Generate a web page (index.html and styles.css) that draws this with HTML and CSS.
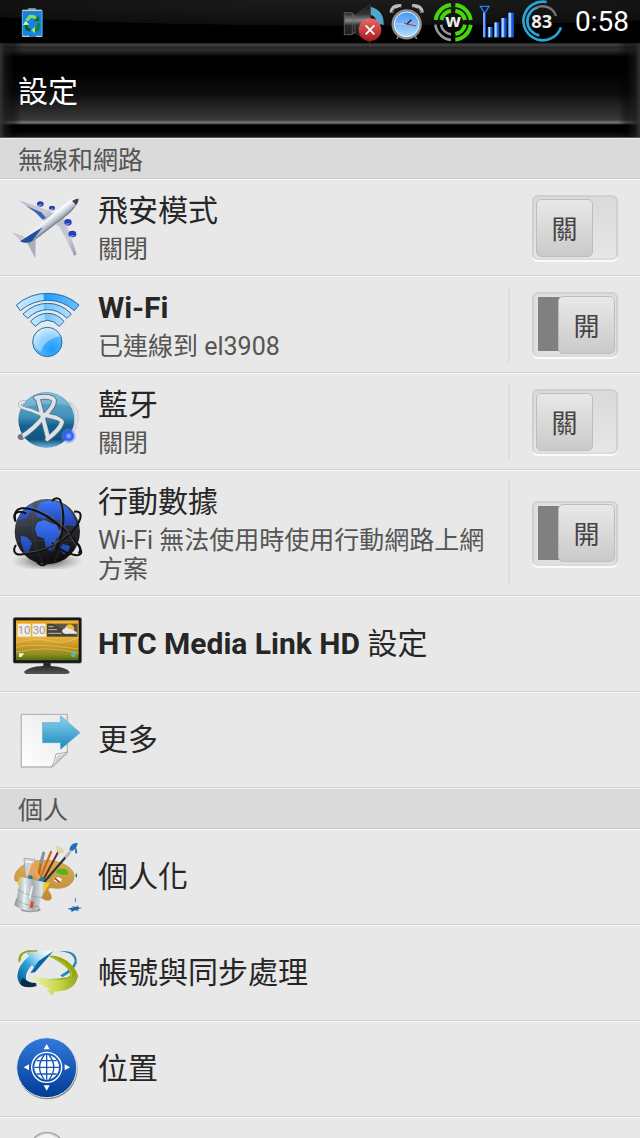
FILE: index.html
```html
<!DOCTYPE html>
<html lang="zh-Hant">
<head>
  <meta charset="UTF-8">
  <meta name="viewport" content="width=device-width, initial-scale=1.0">
  <title>設定</title>
  <link rel="stylesheet" href="styles.css">
</head>
<body>
<div class="screen">

  <!-- Status bar -->
  <div class="status-bar">
    <svg class="status-battery" width="24" height="32" viewBox="60 16 72 96">
      <rect x="84" y="22" width="24" height="8" rx="2" fill="#888"/>
      <rect x="66" y="27" width="61" height="82" rx="4" fill="#1784dc"/>
      <path d="M67 29h59M67 107h20M108 107h18" stroke="#ccc" stroke-width="4"/>
      <path d="M67 30v76M126 30v76" stroke="#5cb0ee" stroke-width="3"/>
      <path d="M80 60l10-13 12 1 8 10" fill="none" stroke="#8bdc5c" stroke-width="9"/>
      <path d="M100 60l18 2-2-16z" fill="#176b1a"/>
      <path d="M117 68l-4 18-10 3" fill="none" stroke="#1e7f1c" stroke-width="9"/>
      <path d="M105 78l-11 11 11 9z" fill="#a9e57a"/>
      <path d="M91 88l-10-3-3-13" fill="none" stroke="#0f5e1d" stroke-width="9"/>
      <path d="M69 73l8-13 10 12z" fill="#d7f4c1"/>
    </svg>
    <div class="status-icons">
      <svg width="42" height="43" viewBox="37 0 126 129">
        <defs>
          <linearGradient id="horn" x1="0" y1="0" x2="0" y2="1">
            <stop offset="0" stop-color="#1a1a1a"/><stop offset=".25" stop-color="#333"/><stop offset=".42" stop-color="#888"/><stop offset=".55" stop-color="#2a2a2a"/><stop offset="1" stop-color="#111"/>
          </linearGradient>
          <linearGradient id="mute" x1="0" y1="0" x2="0" y2="1">
            <stop offset="0" stop-color="#e86a64"/><stop offset="1" stop-color="#a81b1f"/>
          </linearGradient>
        </defs>
        <path d="M122 20q42 10 40 55l-22-5q0-22-18-26z" fill="#4fa6cb"/>
        <path d="M44 38h24v6h10l44-30v114L78 100H68v4H44z" fill="url(#horn)" stroke="#444" stroke-width="2"/>
        <path d="M44 38h24v66H44zM68 44h8v55h-8" fill="none" stroke="#666" stroke-width="2"/>
        <circle cx="121" cy="89" r="34" fill="url(#mute)"/>
        <path d="M108 76l26 27M134 76l-26 27" stroke="#fff" stroke-width="5"/>
      </svg>
      <svg width="38" height="43" viewBox="175 0 114 129">
        <defs>
          <linearGradient id="dial" x1="0" y1="0" x2="0" y2="1">
            <stop offset="0" stop-color="#3f8ff0"/><stop offset="1" stop-color="#b9e3ff"/>
          </linearGradient>
        </defs>
        <path d="M205 105l-6 12M252 105l6 12" stroke="#888" stroke-width="5"/>
        <path d="M182 38q2-22 30-20M274 38q-2-22-30-20" fill="none" stroke="#bbb" stroke-width="11"/>
        <path d="M184 36l10-12M202 24l12-4M272 36l-10-12M254 24l-12-4" stroke="#333" stroke-width="3"/>
        <circle cx="228" cy="73" r="42" fill="url(#dial)" stroke="#8e8e8e" stroke-width="7"/>
        <circle cx="228" cy="73" r="37" fill="none" stroke="#e4f1fb" stroke-width="3"/>
        <path d="M228 73l14-14" stroke="#223" stroke-width="4"/>
        <path d="M196 72h32" stroke="#dbeaff" stroke-width="2"/>
        <path d="M220 70l36 8" stroke="#c03030" stroke-width="3"/>
      </svg>
      <svg width="42" height="43" viewBox="304 0 126 129">
        <g fill="none" stroke="#42d80a" stroke-width="12">
          <path d="M315 60a52 52 0 0 1 46-45M374 15a52 52 0 0 1 46 45M420 74a52 52 0 0 1-46 45"/>
          <path d="M332 60a35 35 0 0 1 29-28M374 32a35 35 0 0 1 29 28M403 74a35 35 0 0 1-29 28"/>
        </g>
        <path d="M314 74a53 53 0 0 0 47 46M331 74a36 36 0 0 0 30 29" fill="none" stroke="#999" stroke-width="8"/>
        <text class="badge-text" x="367" y="81">w</text>
      </svg>
      <svg width="36" height="43" viewBox="445 0 108 129">
        <defs>
          <linearGradient id="bars" x1="0" y1="0" x2="1" y2="0">
            <stop offset="0" stop-color="#1d6be6"/><stop offset=".35" stop-color="#d8edff"/><stop offset=".6" stop-color="#1e6cec"/><stop offset="1" stop-color="#0740b0"/>
          </linearGradient>
        </defs>
        <path d="M449 19h26l-13 21z" fill="none" stroke="#2b7ce8" stroke-width="4"/>
        <path d="M457 38h9v74h-9z" fill="url(#bars)"/>
        <path d="M471 81h15v31h-15z" fill="url(#bars)"/>
        <path d="M490 67h16v45h-16z" fill="url(#bars)"/>
        <path d="M511 54h17v58h-17z" fill="url(#bars)"/>
        <path d="M532 38h18v74h-18z" fill="url(#bars)"/>
      </svg>
      <svg width="43" height="43" viewBox="568 0 129 129">
        <path d="M648 6a58 58 0 1 0 43 76" fill="none" stroke="#2ba5d8" stroke-width="8"/>
        <path d="M622 22a43 43 0 0 0 4 84" fill="none" stroke="#2ba5d8" stroke-width="8"/>
        <path d="M617 23a43 43 0 0 1 59 25" fill="none" stroke="#777" stroke-width="7"/>
        <text class="badge-text" x="633" y="83">83</text>
      </svg>
    </div>
    <time class="clock">0:58</time>
  </div>

  <header class="title-bar">
    <h1>設定</h1>
  </header>

  <main class="settings">
    <h2>無線和網路</h2>
    <ul>
      <li class="row">
        <svg class="icon" viewBox="33 33 216 216">
          <defs>
            <linearGradient id="body" gradientUnits="userSpaceOnUse" x1="135" y1="98" x2="163" y2="134">
              <stop offset="0" stop-color="#8e97ab"/><stop offset=".35" stop-color="#fff"/><stop offset=".6" stop-color="#d8dbe3"/><stop offset="1" stop-color="#7f879a"/>
            </linearGradient>
            <linearGradient id="wing" x1="0" y1="0" x2="1" y2="1">
              <stop offset="0" stop-color="#b9bdc6"/><stop offset=".6" stop-color="#c9ccd6"/><stop offset="1" stop-color="#9196a6"/>
            </linearGradient>
          </defs>
          <path d="M56 58l88 30 24 14-24 28-24-24z" fill="url(#wing)"/>
          <path d="M78 74l28 20 22 22 10-6-14-16z" fill="#3766b6"/>
          <path d="M170 122l20-16 18 48 22 66-8 4-52-80z" fill="url(#wing)"/>
          <path d="M166 132l12 4 42 82-4 2-46-72z" fill="#e6e8ef"/>
          <g fill="#2440b8">
            <ellipse cx="121" cy="69" rx="10" ry="8"/><ellipse cx="156" cy="81" rx="9" ry="7"/>
            <ellipse cx="204" cy="124" rx="11" ry="10"/><ellipse cx="217" cy="159" rx="12" ry="10"/>
          </g>
          <path d="M113 75l12-4M148 87l12-4M196 130l12-2M209 166l12-2" stroke="#a9b4dd" stroke-width="3"/>
          <path d="M78 168l-42-14 26 26z" fill="#c3c7cf"/>
          <path d="M80 182l26 50 1-62z" fill="#a9aeb9"/>
          <path d="M236 53q-14-5-39 14L98 149 62 180q20 12 44-4l103-79q28-29 27-44z" fill="url(#body)"/>
          <path d="M60 181l34-22 34-20-22 28-10 14q-18 9-36 0z" fill="#20509c"/>
          <path d="M216 60q12-8 20-7 0 9-8 20l-6-8z" fill="#39404f"/>
          <path d="M108 172l96-74 20-22" fill="none" stroke="#717a92" stroke-width="3"/>
        </svg>
        <a class="text" href="#airplane">
          <span class="name">飛安模式</span>
          <span class="summary">關閉</span>
        </a>
        <label class="switch">
          <input type="checkbox" aria-label="飛安模式">
          <span class="thumb">關</span>
        </label>
      </li>

      <li class="row">
        <svg class="icon" viewBox="33 324 216 216">
          <defs>
            <linearGradient id="wave" x1="0" y1="0" x2="1" y2="0">
              <stop offset="0" stop-color="#c4e7ff"/><stop offset=".43" stop-color="#a6dbff"/><stop offset=".44" stop-color="#1c9cf8"/><stop offset="1" stop-color="#6cc0fb"/>
            </linearGradient>
            <linearGradient id="wave-soft" x1="0" y1="0" x2="1" y2="0">
              <stop offset="0" stop-color="#c4e7ff"/><stop offset=".43" stop-color="#a6dbff"/><stop offset=".44" stop-color="#6fc1fb"/><stop offset="1" stop-color="#b4dffd"/>
            </linearGradient>
            <radialGradient id="ball" cx=".65" cy=".75" r=".75">
              <stop offset="0" stop-color="#1f9bf9"/><stop offset=".6" stop-color="#55b5fb"/><stop offset="1" stop-color="#c2e6ff"/>
            </radialGradient>
          </defs>
          <g transform="translate(0 180)" fill="url(#wave-soft)" stroke="#246da8" stroke-width="3" stroke-linejoin="round">
            <path d="M49 192Q89 157 143 157T237 192L223 209Q188 178 143 178T61 209z" fill="url(#wave)"/>
            <path d="M69 219Q102 187 143 187T214 219L201 232Q175 206 143 206T83 232z"/>
            <path d="M91 241Q115 217 143 217T192 241L178 256Q162 238 142 238T106 256z"/>
            <circle cx="142" cy="303" r="44" fill="url(#ball)"/>
          </g>
          <path d="M101 483q4-38 41-42 27 0 39 25-48 8-58 46-17-8-22-29z" fill="#d9f0ff" opacity=".5"/>
        </svg>
        <a class="text" href="#wifi">
          <span class="name"><b>Wi-Fi</b></span>
          <span class="summary">已連線到 el3908</span>
        </a>
        <label class="switch split">
          <input type="checkbox" aria-label="Wi-Fi" checked>
          <span class="thumb">開</span>
        </label>
      </li>

      <li class="row">
        <svg class="icon" viewBox="33 45 216 216">
          <defs>
            <linearGradient id="bt" x1="0" y1="0" x2="0" y2="1">
              <stop offset="0" stop-color="#69afd0"/><stop offset=".45" stop-color="#3f90b9"/><stop offset=".6" stop-color="#146190"/><stop offset=".85" stop-color="#0f5482"/><stop offset="1" stop-color="#79b9da"/>
            </linearGradient>
            <radialGradient id="glow">
              <stop offset="0" stop-color="#9cf"/><stop offset=".5" stop-color="#2354ff"/><stop offset="1" stop-color="#a0a0ff" stop-opacity="0"/>
            </radialGradient>
          </defs>
          <circle cx="139" cy="147" r="84" fill="url(#bt)"/>
          <path d="M68 110q20-43 71-45 49 2 68 40-66-15-139 5z" fill="#fff" opacity=".2"/>
          <path d="M205 92q32 12 30 50-3 34-24 50 16-29 14-57-3-25-20-43z" fill="#e1e4e8" stroke="#b4bac4" stroke-width="2"/>
          <g fill="none" stroke-linecap="round" stroke-linejoin="round">
            <path d="M114 84l30 116M108 80q46-8 54 8 2 18-32 50-26 34-66 60" stroke="#4a6f88" stroke-width="17"/>
            <path d="M130 132q54 8 56 22-6 22-44 50" stroke="#4a6f88" stroke-width="17"/>
            <path d="M72 93q-16 2-13 10 6 8 32 14l40 16" stroke="#8d9ba8" stroke-width="10"/>
            <path d="M72 93q-16 2-13 10 6 8 32 14l40 16" stroke="#e6e8eb" stroke-width="7"/>
            <path d="M114 84l30 116M108 80q46-8 54 8 2 18-32 50-26 34-66 60" stroke="#dee1e5" stroke-width="12"/>
            <path d="M130 132q54 8 56 22-6 22-44 50" stroke="#dee1e5" stroke-width="12"/>
          </g>
          <circle cx="61" cy="198" r="8" fill="#777"/>
          <circle cx="206" cy="195" r="24" fill="url(#glow)"/>
        </svg>
        <a class="text" href="#bluetooth">
          <span class="name">藍牙</span>
          <span class="summary">關閉</span>
        </a>
        <label class="switch split">
          <input type="checkbox" aria-label="藍牙">
          <span class="thumb">關</span>
        </label>
      </li>

      <li class="row">
        <svg class="icon" viewBox="33 379 216 216">
          <defs>
            <radialGradient id="shadow">
              <stop offset="0" stop-color="#444"/><stop offset="1" stop-color="#888" stop-opacity="0"/>
            </radialGradient>
            <linearGradient id="dark" x1=".3" y1="0" x2=".5" y2="1">
              <stop offset="0" stop-color="#5a5f6c"/><stop offset=".4" stop-color="#33363f"/><stop offset="1" stop-color="#0c0c0c"/>
            </linearGradient>
            <linearGradient id="land" x1="0" y1="0" x2="0" y2="1">
              <stop offset="0" stop-color="#3d78fb"/><stop offset="1" stop-color="#1c3fa8"/>
            </linearGradient>
          </defs>
          <ellipse cx="141" cy="572" rx="108" ry="30" fill="url(#shadow)"/>
          <circle cx="142" cy="483" r="98" fill="url(#dark)"/>
          <path d="M92 402q-28 16-38 48l26-8 10-17 16-10zM120 396l-14 24 4 20 24 4 14-10 10 12 20 4 12 20 14-8 28 8q-10-50-50-72-30-16-62-2z" fill="url(#land)"/>
          <path d="M112 455l22-7 20 10 16 4 6 16 14 2-22 26-4 18-14 18-14-16-3-22-22-8-6-22zM62 495l18 4 16 18-10 26-12 2q-12-24-12-50zM188 520l22 6-4 16-14 9-14-14z" fill="url(#land)"/>
          <path d="M50 462h184M50 510h184M112 392q-35 90 15 184M172 390q36 86-8 184" fill="none" stroke="#52688f" stroke-opacity=".4" stroke-width="2"/>
          <g fill="none" stroke="#111" stroke-width="6">
            <path d="M47 453c-14-50 31-51 91-18 58 41 102 81 106 110-4 22-60-2-88-28"/>
            <path d="M156 391q12-14 24-4c24 64 1 162-42 192-10 9-22 5-30-10"/>
            <path d="M222 423q24-4 19 20c-16 54-104 105-174 108-24 4-30-12-19-28"/>
            <path d="M46 450q-8-17 4-24 9-7 29 3M236 549q10-15-2-29"/>
          </g>
          <path d="M102 412q60 20 98 66l30 50M182 398q13 76-25 144M69 547q84-5 138-60" fill="none" stroke="#666" stroke-width="2"/>
        </svg>
        <a class="text" href="#mobile">
          <span class="name">行動數據</span>
          <span class="summary">Wi-Fi 無法使用時使用行動網路上網方案</span>
        </a>
        <label class="switch split">
          <input type="checkbox" aria-label="行動數據" checked>
          <span class="thumb">開</span>
        </label>
      </li>

      <li class="row single">
        <svg class="icon" viewBox="33 52 216 216">
          <defs>
            <linearGradient id="field" x1="0" y1="0" x2="0" y2="1">
              <stop offset="0" stop-color="#efa51a"/><stop offset=".4" stop-color="#e8b640"/><stop offset=".6" stop-color="#cf9a28"/><stop offset=".85" stop-color="#8f8f1e"/><stop offset="1" stop-color="#4c6a10"/>
            </linearGradient>
            <linearGradient id="stand" x1="0" y1="0" x2="0" y2="1">
              <stop offset="0" stop-color="#1b1b1b"/><stop offset="1" stop-color="#555"/>
            </linearGradient>
          </defs>
          <path d="M130 216h22v10q46 2 58 19-2 5-12 5H83q-10 0-11-7 14-15 58-17z" fill="url(#stand)"/>
          <rect x="40" y="81" width="204" height="136" rx="4" fill="#151515" stroke="#444" stroke-width="2"/>
          <rect x="48" y="89" width="188" height="120" fill="url(#field)"/>
          <path d="M49 156q60-16 102-5t84-11M49 170q50-14 186 5M49 184q90-20 186 3" fill="none" stroke="#f4d47b" stroke-width="3" opacity=".5"/>
          <rect x="53" y="99" width="39" height="39" fill="#f2efe8"/>
          <rect x="97" y="99" width="40" height="39" fill="#f2efe8"/>
          <rect x="141" y="99" width="92" height="39" fill="#4a4433"/>
          <text class="widget-time" x="72" y="131">10</text>
          <text class="widget-time" x="117" y="131">30</text>
          <path d="M145 108h16M145 117h26M145 128h40" stroke="#bbb" stroke-width="3"/>
          <circle cx="209" cy="115" r="14" fill="#ffae17"/>
          <path d="M187 124q-3-8 6-10 8-9 16 2 9-4 12 5 10 0 10 8h-24q-16 3-20-5z" fill="#dfe8ee"/>
          <path d="M57 188h16l-9 11h-7z" fill="#eaf2d8"/>
          <circle cx="220" cy="193" r="7" fill="#49b8c9"/>
          <path d="M140 90h95v48z" fill="#fff" opacity=".1"/>
        </svg>
        <a class="text" href="#media-link">
          <span class="name"><b>HTC Media Link HD</b> 設定</span>
        </a>
      </li>

      <li class="row single">
        <svg class="icon" viewBox="33 340 216 216">
          <defs>
            <linearGradient id="paper" x1="1" y1="0" x2="0" y2="1">
              <stop offset="0" stop-color="#e6e8e8"/><stop offset="1" stop-color="#fff"/>
            </linearGradient>
            <linearGradient id="arrow" x1="0" y1="0" x2="0" y2="1">
              <stop offset="0" stop-color="#8ad4ee"/><stop offset="1" stop-color="#1b85bd"/>
            </linearGradient>
          </defs>
          <path d="M64 371h138v115l-46 43H64z" fill="url(#paper)" stroke="#b5b8b8" stroke-width="4"/>
          <path d="M202 484q-14 4-34 6-4 26-13 39z" fill="#f6f6f6" stroke="#aaa" stroke-width="3"/>
          <path d="M198 488l-26 7-8 23z" fill="#d0d0d0"/>
          <path d="M128 396h54v-20l58 50-58 50v-20h-54z" fill="url(#arrow)" stroke="#4aa3c8" stroke-width="2"/>
        </svg>
        <a class="text" href="#more">
          <span class="name">更多</span>
        </a>
      </li>
    </ul>

    <h2>個人</h2>
    <ul>
      <li class="row single">
        <svg class="icon" viewBox="33 181 216 216">
          <defs>
            <linearGradient id="wood" x1="0" y1="0" x2="0" y2="1">
              <stop offset="0" stop-color="#e0ad50"/><stop offset="1" stop-color="#b98a35"/>
            </linearGradient>
            <linearGradient id="tin" x1="0" y1="0" x2="1" y2="0">
              <stop offset="0" stop-color="#8b9194"/><stop offset=".3" stop-color="#e4e9eb"/><stop offset=".55" stop-color="#a4adb1"/><stop offset=".8" stop-color="#dde3e6"/><stop offset="1" stop-color="#959b9e"/>
            </linearGradient>
          </defs>
          <ellipse cx="92" cy="387" rx="30" ry="8" fill="#666" opacity=".6"/>
          <path d="M45 300c-8-35 36-61 85-61 55 0 95 23 92 51-3 25-33 37-60 32-20-4-20 5-13 14 8 12 7 23-6 23-24 0-25-26-32-33z" fill="url(#wood)" stroke="#b98a3a" stroke-width="2"/>
          <path d="M167 274q13-17 35-6l4 13q-22 7-39-7z" fill="#52b51d"/>
          <path d="M162 300q2-10 14-10l9 5-5 13z" fill="#fff"/>
          <path d="M165 293l15 13" stroke="#9b3b25" stroke-width="5"/>
          <path d="M72 233l33 3-7 52H76z" fill="#ced1d2" stroke="#999" stroke-width="2"/>
          <path d="M76 242l22 3-13 36" stroke="#f8f8f8" stroke-width="5" fill="none"/>
          <g fill="none" stroke-linecap="round">
            <path d="M111 304l14-66" stroke="#b86322" stroke-width="7"/>
            <path d="M123 246l8-29" stroke="#8b9194" stroke-width="9"/>
            <path d="M115 306l38-92" stroke="#d0682d" stroke-width="7"/>
            <path d="M125 306l51-95" stroke="#672a25" stroke-width="6"/>
            <path d="M132 305l75-87" stroke="#30383d" stroke-width="7"/>
            <path d="M198 228l17-20" stroke="#b8bfc4" stroke-width="8"/>
            <path d="M85 298l13-39 19 36" stroke="#e7a35f" stroke-width="13"/>
            <path d="M91 299v-8M120 302l7-6" stroke="#1683a5" stroke-width="14"/>
          </g>
          <path d="M166 198q9-6 24 9l3 8-18 4z" fill="#e5d4a5"/>
          <path d="M208 208q3-22 25-22 0 15-15 24zM227 202q-5 14 2 18 5-4 0-18zM229 277q-6 10 0 14 5-4 0-14zM226 349q-3 13 0 17 3-4 0-17z" fill="#2072b6"/>
          <path d="M202 384l19-4-7-4 14 3 7-5-1 6 12 2-13 4 4 5-12-2-11 5v-6z" fill="#1768aa"/>
          <path d="M62 288l84 19q-22 35-31 77-4 10-27 7-31-4-45-18 3-17 8-24z" fill="url(#tin)"/>
          <path d="M51 325q37 25 78 26M48 356q30 21 71 22" stroke="#8b9498" stroke-width="2" fill="none"/>
          <path d="M61 291l-7 22M134 310l12-2-14 24z" stroke="#edcf24" fill="#edcf24" stroke-width="5"/>
          <path d="M93 361l8 2-2 18-10 2z" fill="#e05027"/>
          <path d="M77 310l-6 59M97 316l-8 38" stroke="#eef2f4" stroke-width="5"/>
        </svg>
        <a class="text" href="#personalize">
          <span class="name">個人化</span>
        </a>
      </li>

      <li class="row single">
        <svg class="icon" viewBox="33 20 216 216">
          <defs>
            <linearGradient id="blue" gradientUnits="userSpaceOnUse" x1="150" y1="65" x2="60" y2="150">
              <stop offset="0" stop-color="#fff"/><stop offset=".3" stop-color="#b5dff2"/><stop offset=".6" stop-color="#2da2da"/><stop offset="1" stop-color="#0868a0"/>
            </linearGradient>
            <linearGradient id="lime" x1="0" y1="0" x2="1" y2="0">
              <stop offset="0" stop-color="#eef5b0"/><stop offset=".6" stop-color="#c8d548"/><stop offset="1" stop-color="#93a51b"/>
            </linearGradient>
          </defs>
          <path d="M56 98q-6-31 28-38l30 0-5 5q-46-4-47 25z" fill="#91a512"/>
          <path d="M176 63q59-6 54 36-10 26-43 42l-6-6q38-21 43-42-2-28-48-30z" fill="#2587bd"/>
          <path d="M159 62l-80 4 8 12q-33 26-35 60 2 28 24 32l26-2-24-20q-4-20 18-44l6 8 14-14z" fill="url(#blue)"/>
          <path d="M160 62l-44 30-25 36 14-2z" fill="#0866a2"/>
          <path d="M70 144q14 14 38 14l2 9q-28 8-46-2-8-12 6-21z" fill="#052f49"/>
          <path d="M144 76q40-2 70 27 18 18 20 36-9 24-44 24-48-2-92-20 60 7 104-2 14-6 4-23-17-20-62-42z" fill="#97a80d"/>
          <path d="M144 76q14 1 26 9 36 17 46 44 2 10-6 16 10-24-16-42-20-16-50-27z" fill="#b9c83a"/>
          <path d="M94 137q60 16 108 8 18-4 31-10-3 48-70 49l-6 12-18-17 14-2q-36-12-59-40z" fill="url(#lime)"/>
        </svg>
        <a class="text" href="#accounts">
          <span class="name">帳號與同步處理</span>
        </a>
      </li>

      <li class="row single">
        <svg class="icon" viewBox="33 307 216 216">
          <defs>
            <linearGradient id="compass" x1="0" y1="0" x2="0" y2="1">
              <stop offset="0" stop-color="#3379dc"/><stop offset="1" stop-color="#003c94"/>
            </linearGradient>
          </defs>
          <circle cx="142" cy="415" r="91" fill="#888"/>
          <circle cx="140" cy="411" r="90" fill="url(#compass)" stroke="#e1e4e8" stroke-width="3"/>
          <circle cx="140" cy="410" r="45" fill="none" stroke="#fff" stroke-width="4"/>
          <circle cx="140" cy="410" r="37" fill="#fff"/>
          <path d="M140 373v74M103 410h74M110 390h60M110 430h60M133 373q-29 37 0 74M147 373q29 37 0 74" fill="none" stroke="#1859b7" stroke-width="4"/>
          <path d="M140 340l9 16h-18zM140 480l9-16h-18zM71 410l16-9v18zM210 410l-16-9v18z" fill="#fff"/>
        </svg>
        <a class="text" href="#location">
          <span class="name">位置</span>
        </a>
      </li>

      <li class="row single">
        <svg class="icon" viewBox="33 597 216 216">
          <circle cx="141" cy="662" r="54" fill="#f3f3f3" stroke="#9a9a9a" stroke-width="4"/>
          <path d="M112 620q29-20 58 0" fill="none" stroke="#ccc" stroke-width="4"/>
        </svg>
      </li>
    </ul>
  </main>

</div>
</body>
</html>
```
FILE: styles.css
```css
* {
  box-sizing: border-box;
}
body {
  margin: 0;
  font-family: Roboto, "Noto Sans CJK TC", sans-serif;
  background-color: #e8e8e8;
  color: #262626;
}
.screen {
  display: flex;
  flex-direction: column;
  height: 100vh;
}

/* Status bar */
.status-bar {
  display: flex;
  flex-shrink: 0;
  align-items: center;
  height: 43px;
  padding: 0 11px 0 20px;
  background: radial-gradient(ellipse 75% 60% at 55% 0, #1c1c1c 0, #141414 60%, #0e0e0e 98%, #000 100%) #000;
  color: #fff;
}
.status-icons {
  display: flex;
  gap: 5px;
  margin-left: auto;
}
.badge-text {
  font-family: "Noto Sans", sans-serif;
  font-size: 55px;
  font-weight: bold;
  text-anchor: middle;
  fill: #eee;
}
.widget-time {
  font-size: 34px;
  text-anchor: middle;
  fill: #999;
}
.clock {
  margin-left: 12px;
  font-size: 28px;
  line-height: 46px;
}

.title-bar {
  flex-shrink: 0;
  height: 95px;
  padding: 0 18px;
  border-bottom: 1px solid #555;
  background:
    linear-gradient(to right, #333 0, rgba(24, 24, 24, 0.7) 5px, rgba(0, 0, 0, 0.4) 14px, transparent 22px, transparent calc(100% - 22px), rgba(0, 0, 0, 0.4) calc(100% - 14px), rgba(24, 24, 24, 0.7) calc(100% - 5px), #333 100%),
    linear-gradient(#222 0, #444 2px, #262626 4px, #2e2e2e 7px, #000 14px, #000 26px, #0c0c0c 50px, #3a3a3a 77px, #707070 79px, #707070 80px, #000 82px, #000 88px, #161616 94px);
  color: #fff;
}
.title-bar h1 {
  margin: 0;
  font-size: 30px;
  font-weight: normal;
  line-height: 97px;
}

/* Settings list */
.settings {
  flex: 1;
  min-height: 0;
  overflow-y: auto;
  scrollbar-width: none;
}
.settings h2 {
  height: 41px;
  margin: 0;
  padding: 0 18px;
  border-top: 1px solid #eee;
  border-bottom: 1px solid #c8c8c8;
  background-color: #dadada;
  color: #555;
  font-size: 25px;
  font-weight: normal;
  line-height: 43px;
}
.settings ul {
  margin: 0;
  padding: 0;
  list-style: none;
}
.row {
  display: flex;
  align-items: center;
  padding: 0 22px 0 11px;
  border-top: 1px solid #f8f8f8;
  border-bottom: 1px solid #d2d2d2;
}
.icon {
  flex-shrink: 0;
  width: 72px;
  height: 72px;
}
.text {
  flex: 1;
  padding: 7px 15px 11px;
  color: inherit;
  text-decoration: none;
}
.name,
.summary {
  display: block;
}
.name {
  font-size: 30px;
  line-height: 48px;
}
.summary {
  color: #555;
  font-size: 25px;
  line-height: 29px;
}
.single {
  height: 96px;
}
.single .text {
  padding: 0 15px;
}

/* On/off switch */
.switch {
  display: grid;
  flex-shrink: 0;
  align-items: center;
  cursor: pointer;
}
.split {
  align-self: stretch;
  margin: 10px 0;
  padding-left: 22px;
  border-left: 2px solid #dcdcda;
}
.switch input,
.thumb {
  grid-area: 1 / 1;
}
.switch input {
  appearance: none;
  width: 86px;
  height: 65px;
  margin: 0;
  border: 2px solid #d0d0d0;
  border-bottom-color: #dcdcdc;
  border-radius: 6px;
  background: linear-gradient(#dadada, #e6e6e6);
  box-shadow: 0 2px 0 #fafafa;
}
.switch input:checked {
  background: linear-gradient(#808080, #808080) 4px 3px / 30px 54px no-repeat #e0e0e0;
}
.thumb {
  width: 57px;
  height: 58px;
  margin-left: 4px;
  border: 1px solid #bdbdbd;
  border-radius: 5px;
  background: linear-gradient(#e8e8e8, #cacaca);
  color: #444;
  font-size: 26px;
  line-height: 60px;
  text-align: center;
  pointer-events: none;
}
.switch input:checked + .thumb {
  margin-left: 26px;
}
```
